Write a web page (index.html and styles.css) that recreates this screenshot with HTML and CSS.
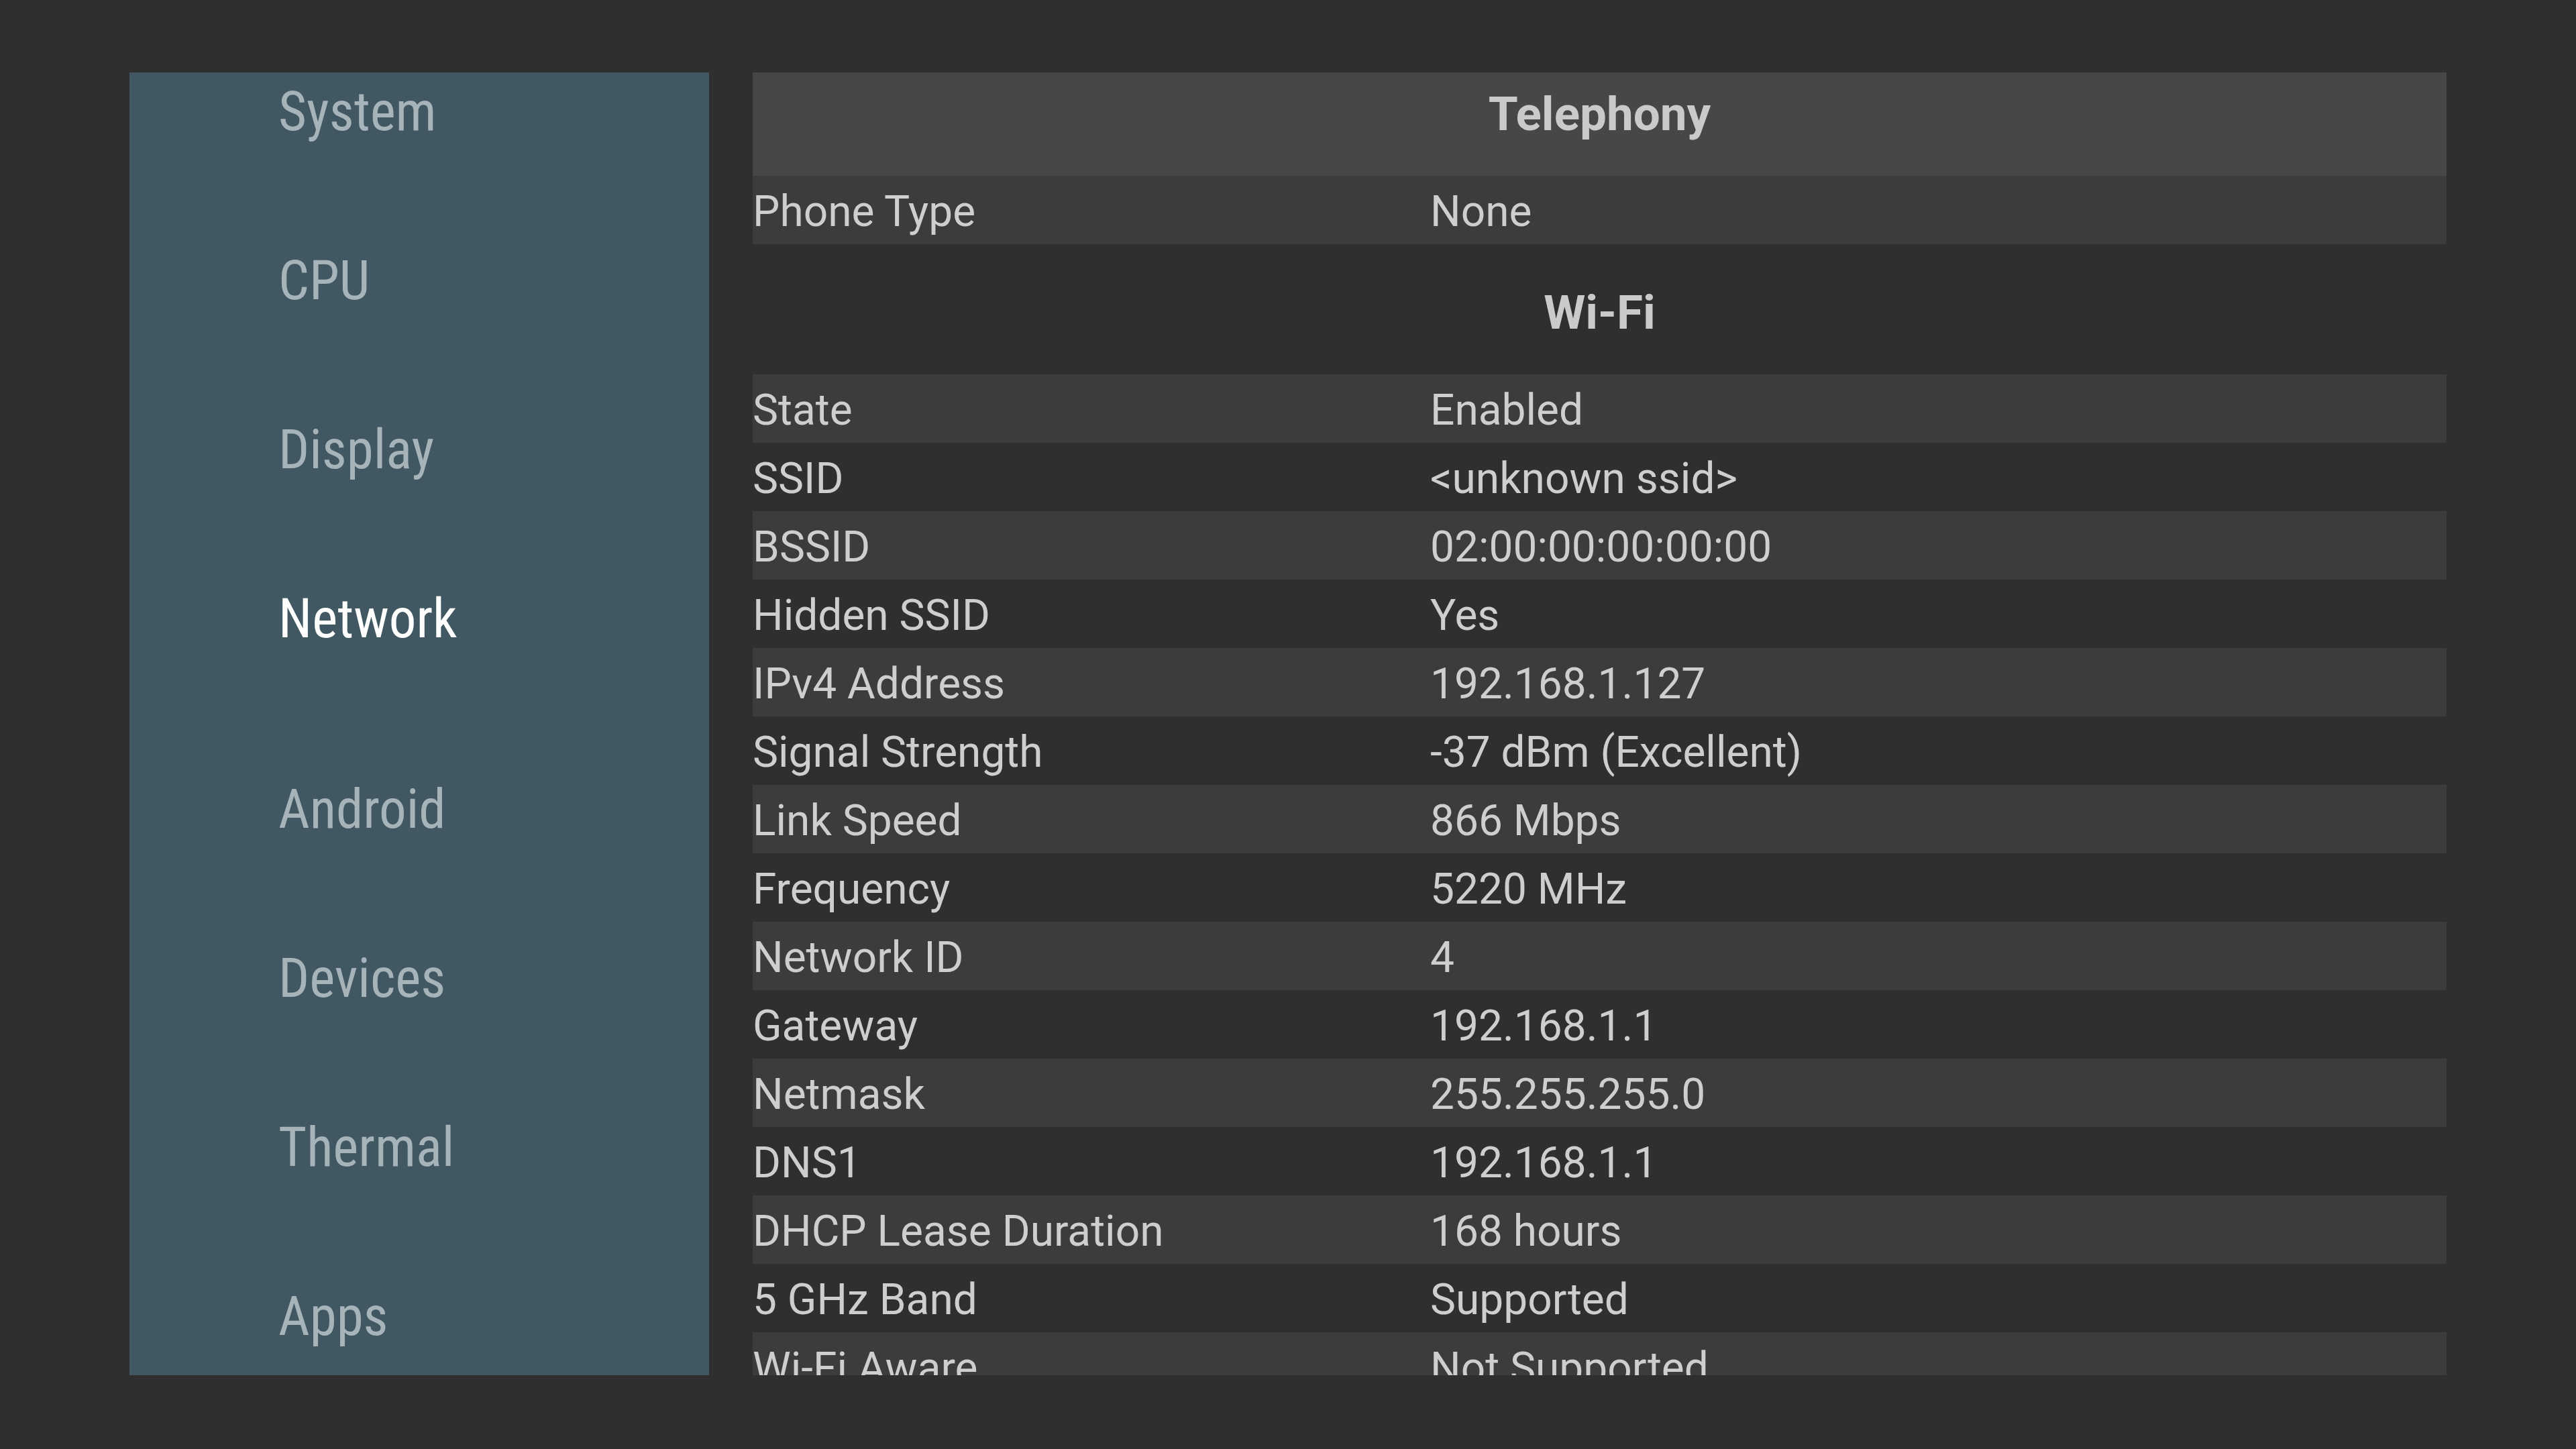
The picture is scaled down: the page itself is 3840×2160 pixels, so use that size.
FILE: index.html
```html
<!DOCTYPE html>
<html lang="en">
<head>
<meta charset="utf-8">
<title>Network</title>
<link rel="stylesheet" href="styles.css">
</head>
<body>
<div class="screen">
  <nav class="sidebar">
    <div class="nav-item">System</div>
    <div class="nav-item">CPU</div>
    <div class="nav-item">Display</div>
    <div class="nav-item active">Network</div>
    <div class="nav-item">Android</div>
    <div class="nav-item">Devices</div>
    <div class="nav-item">Thermal</div>
    <div class="nav-item">Apps</div>
  </nav>
  <main class="content">
    <div class="section-title first">Telephony</div>
    <div class="row shade"><div class="cell-label">Phone Type</div><div class="cell-value">None</div></div>
    <div class="section-title plain">Wi-Fi</div>
    <div class="row shade"><div class="cell-label">State</div><div class="cell-value">Enabled</div></div>
    <div class="row"><div class="cell-label">SSID</div><div class="cell-value">&lt;unknown ssid&gt;</div></div>
    <div class="row shade"><div class="cell-label">BSSID</div><div class="cell-value">02:00:00:00:00:00</div></div>
    <div class="row"><div class="cell-label">Hidden SSID</div><div class="cell-value">Yes</div></div>
    <div class="row shade"><div class="cell-label">IPv4 Address</div><div class="cell-value">192.168.1.127</div></div>
    <div class="row"><div class="cell-label">Signal Strength</div><div class="cell-value">-37 dBm (Excellent)</div></div>
    <div class="row shade"><div class="cell-label">Link Speed</div><div class="cell-value">866 Mbps</div></div>
    <div class="row"><div class="cell-label">Frequency</div><div class="cell-value">5220 MHz</div></div>
    <div class="row shade"><div class="cell-label">Network ID</div><div class="cell-value">4</div></div>
    <div class="row"><div class="cell-label">Gateway</div><div class="cell-value">192.168.1.1</div></div>
    <div class="row shade"><div class="cell-label">Netmask</div><div class="cell-value">255.255.255.0</div></div>
    <div class="row"><div class="cell-label">DNS1</div><div class="cell-value">192.168.1.1</div></div>
    <div class="row shade"><div class="cell-label">DHCP Lease Duration</div><div class="cell-value">168 hours</div></div>
    <div class="row"><div class="cell-label">5 GHz Band</div><div class="cell-value">Supported</div></div>
    <div class="row shade"><div class="cell-label">Wi-Fi Aware</div><div class="cell-value">Not Supported</div></div>
  </main>
</div>
</body>
</html>
```

FILE: styles.css
```css
html, body {
  margin: 0;
  padding: 0;
  background: #2f2f2f;
}

body {
  width: 3840px;
  height: 2160px;
  overflow: hidden;
  font-family: Roboto, "Noto Sans", "Liberation Sans", sans-serif;
}

.screen {
  display: flex;
  gap: 65px;
  padding: 108px 0 0 193px;
  height: 1942px;
}

.sidebar {
  width: 864px;
  height: 1942px;
  background: #415862;
  overflow: hidden;
  padding: 9px 0 0 222px;
  box-sizing: border-box;
  flex: none;
}

.nav-item {
  height: 252px;
  font-family: "Roboto Condensed", Roboto, sans-serif;
  font-size: 81px;
  line-height: 100px;
  color: #a6b3b9;
  white-space: nowrap;
}

.nav-item.active {
  height: 284px;
  color: #ffffff;
}

.content {
  width: 2525px;
  height: 1942px;
  overflow: hidden;
  flex: none;
  color: #cecece;
}

.section-title {
  height: 154px;
  box-sizing: border-box;
  padding-top: 12px;
  font-size: 71px;
  font-weight: 700;
  line-height: 100px;
  text-align: center;
  color: #cacaca;
  background: #474747;
}

.section-title.plain {
  background: transparent;
  margin-top: 40px;
}

.row {
  display: grid;
  grid-template-columns: 40% 60%;
  height: 102px;
  box-sizing: border-box;
  padding-top: 6px;
  font-size: 64px;
  line-height: 96px;
  white-space: nowrap;
}

.row.shade {
  background: #3c3c3c;
}

.cell-label,
.cell-value {
  overflow: hidden;
}
```
